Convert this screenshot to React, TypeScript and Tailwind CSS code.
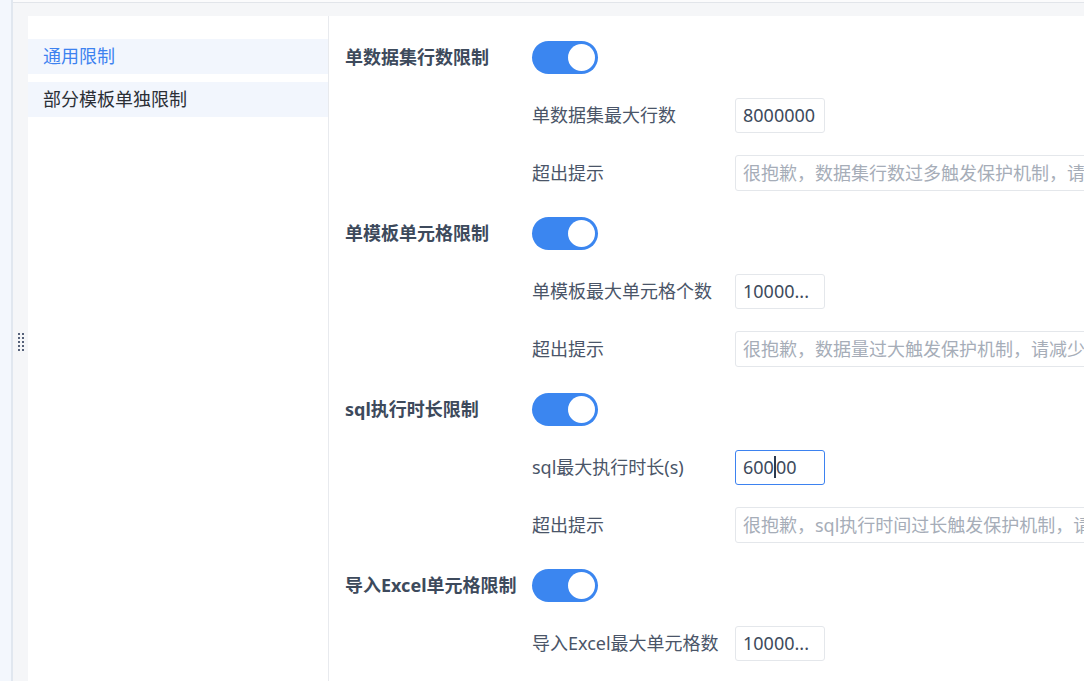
import React from "react";

const FONT = { fontFamily: '"Noto Sans", "Noto Sans CJK SC", sans-serif' };

function Toggle() {
  return (
    <div className="flex h-[33px] w-[66px] items-center justify-end rounded-full bg-[#3b86f0] pr-[3px]">
      <div className="h-[27px] w-[27px] rounded-full bg-white" />
    </div>
  );
}

function SubRow({
  label,
  children,
}: {
  label: string;
  children: React.ReactNode;
}) {
  return (
    <div className="ml-[187px] flex h-[58px] items-center">
      <div className="w-[203px] shrink-0 text-[18px] text-[#4a5568]">{label}</div>
      {children}
    </div>
  );
}

function SmallInput({ value }: { value: string }) {
  return (
    <div className="flex h-[35px] w-[90px] shrink-0 items-center rounded-[3px] border border-[#e4e7eb] bg-white px-[7px] text-[18px] text-[#3d4a5c] whitespace-nowrap overflow-hidden">
      {value}
    </div>
  );
}

function HintInput({ placeholder }: { placeholder: string }) {
  return (
    <div className="flex h-[36px] w-[420px] shrink-0 items-center rounded-[3px] border border-[#e4e7eb] bg-white px-[7px] text-[18px] text-[#a6adb8] whitespace-nowrap overflow-hidden">
      {placeholder}
    </div>
  );
}

function Group({
  title,
  children,
}: {
  title: string;
  children: React.ReactNode;
}) {
  return (
    <div className="flex flex-col">
      <div className="flex h-[58px] items-center">
        <div className="w-[187px] shrink-0 text-[18px] font-bold text-[#3d4a5c]">{title}</div>
        <Toggle />
      </div>
      {children}
    </div>
  );
}

export default function App() {
  return (
    <div className="flex h-[681px] w-[1084px] overflow-hidden bg-[#f5f6f8]" style={FONT}>
      <div className="w-[13px] shrink-0 border-r-2 border-[#e1e7ef] bg-[#f3f7fd]" />
      <div className="flex min-w-0 flex-1 flex-col">
        <div className="h-[3px] shrink-0 border-b border-[#e2e5ea] bg-[#fbfbfc]" />
        <div className="flex min-h-0 flex-1">
          <div className="flex w-[15px] shrink-0 items-center justify-center">
            <div className="grid grid-cols-2 gap-x-[2px] gap-y-[2px] pl-[1px]">
              {Array.from({ length: 10 }).map((_, i) => (
                <div key={i} className="h-[2px] w-[2px] bg-[#56627a]" />
              ))}
            </div>
          </div>
          <div className="flex min-w-0 flex-1 flex-col pt-[13px]">
            <div className="flex min-h-0 flex-1 bg-white">
              <div className="w-[301px] shrink-0 border-r border-[#e8eaee] pt-[23px]">
                <div className="flex h-[35px] items-center bg-[#f2f6fd] pl-[15px] text-[18px] text-[#3d82f0]">
                  通用限制
                </div>
                <div className="mt-[8px] flex h-[35px] items-center bg-[#f2f6fd] pl-[15px] text-[18px] text-[#2b2f36]">
                  部分模板单独限制
                </div>
              </div>
              <div className="flex min-w-0 flex-1 flex-col gap-[2px] overflow-hidden pl-[16px] pt-[12px]">
                <Group title="单数据集行数限制">
                  <SubRow label="单数据集最大行数">
                    <SmallInput value="8000000" />
                  </SubRow>
                  <SubRow label="超出提示">
                    <HintInput placeholder="很抱歉，数据集行数过多触发保护机制，请减少数据集行数" />
                  </SubRow>
                </Group>
                <Group title="单模板单元格限制">
                  <SubRow label="单模板最大单元格个数">
                    <SmallInput value="10000..." />
                  </SubRow>
                  <SubRow label="超出提示">
                    <HintInput placeholder="很抱歉，数据量过大触发保护机制，请减少数据量" />
                  </SubRow>
                </Group>
                <Group title="sql执行时长限制">
                  <SubRow label="sql最大执行时长(s)">
                    <div className="flex h-[35px] w-[90px] shrink-0 items-center rounded-[3px] border border-[#3d82f0] bg-white px-[7px] text-[18px] text-[#3d4a5c] whitespace-nowrap">
                      <span>600</span>
                      <span className="inline-block h-[22px] w-[2px] bg-[#2c3a4f]" />
                      <span>00</span>
                    </div>
                  </SubRow>
                  <SubRow label="超出提示">
                    <HintInput placeholder="很抱歉，sql执行时间过长触发保护机制，请优化sql" />
                  </SubRow>
                </Group>
                <Group title="导入Excel单元格限制">
                  <SubRow label="导入Excel最大单元格数">
                    <SmallInput value="10000..." />
                  </SubRow>
                </Group>
              </div>
            </div>
          </div>
        </div>
      </div>
    </div>
  );
}
